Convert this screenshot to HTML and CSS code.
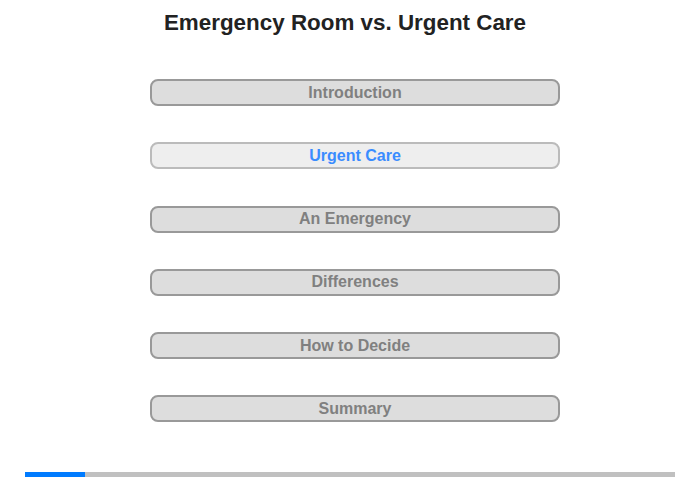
FILE: index.html
```html
<!DOCTYPE html>
<html lang="en">
  <head>
    <meta charset="UTF-8" />
    <meta name="viewport" content="width=device-width, initial-scale=1.0" />
    <title>Emergency Room vs. Urgent Care</title>
    <link rel="stylesheet" href="styles.css">
  </head>
  <body>
    <header>
      <h1>Emergency Room vs. Urgent Care</h1>
    </header>
    <main>
      <nav class="menu">
        <button class="item">Introduction</button>
        <button class="item activo">Urgent Care</button>
        <button class="item">An Emergency</button>
        <button class="item">Differences</button>
        <button class="item">How to Decide</button>
        <button class="item">Summary</button>
      </nav>
    </main>
    <footer>
      <div class="barra">
        <div class="progreso"></div>
      </div>
    </footer>
  </body>
</html>
```

FILE: styles.css
```css
body{
    margin: 0;
    font-family: "Liberation Sans", Arial, sans-serif;
    background: #fff;
}
header{
    display: flex;
    justify-content: center;
    padding-top: 9px;
    padding-right: 10px;
}
header h1{
    margin: 0;
    font-size: 22.4px;
    line-height: 28px;
    color: #222;
}
.menu{
    display: flex;
    flex-direction: column;
    gap: 36.25px;
    width: 410px;
    margin-left: 150px;
    margin-top: 42px;
}
.item{
    height: 27px;
    border: 2px solid #999;
    border-radius: 8px;
    background-color: #ddd;
    color: #808080;
    font-family: "Liberation Sans", Arial, sans-serif;
    font-weight: bold;
    font-size: 16px;
    padding: 0;
    cursor: pointer;
}
.item.activo{
    background-color: #eee;
    border-color: #bbb;
    color: #3a8cff;
}
footer{
    margin-top: 50px;
    padding: 0 25px;
}
.barra{
    height: 5px;
    background-color: #c0c0c0;
}
.progreso{
    width: 60px;
    height: 100%;
    background-color: #007bff;
}
```
